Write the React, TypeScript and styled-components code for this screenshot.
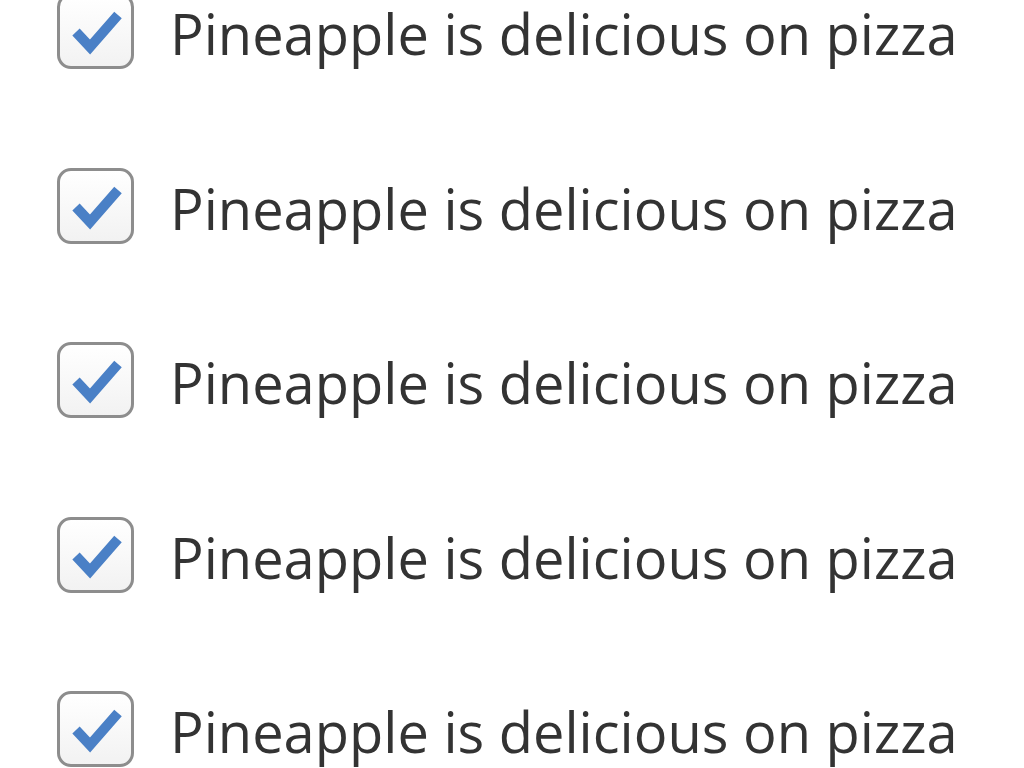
import { createGlobalStyle } from 'styled-components';
import styled from 'styled-components';

const GlobalStyle = createGlobalStyle`
  html, body {
    margin: 0;
    padding: 0;
    background: #fff;
    overflow: hidden;
  }
`;

const List = styled.ul`
  list-style: none;
  margin: -7px 0 0 0;
  padding: 0 0 0 57px;
  display: flex;
  flex-direction: column;
  gap: 98.5px;
  font-family: 'Open Sans', 'Noto Sans', sans-serif;
`;

const Row = styled.li`
  display: flex;
  align-items: center;
  height: 76px;
  gap: 36px;
`;

const Box = styled.span`
  box-sizing: border-box;
  width: 77px;
  height: 76px;
  flex-shrink: 0;
  border: 3px solid #8d8d8d;
  border-radius: 14px;
  background: linear-gradient(#ffffff, #f2f2f2);
  display: flex;
  align-items: center;
  justify-content: center;
  & svg {
    display: block;
  }
`;

const Label = styled.span`
  font-size: 56px;
  color: #333;
  line-height: 1;
  padding-top: 4px;
  white-space: nowrap;
`;

const Check = () => (
  <svg width='71' height='70' viewBox='0 0 71 70'>
    <polyline
      points='16,36 30,51 58,19'
      fill='none'
      stroke='#4a80c6'
      strokeWidth='10'
      strokeLinejoin='miter'
    />
  </svg>
);

const items = Array.from({ length: 5 }, () => 'Pineapple is delicious on pizza');

const App = () => {
  return (
    <>
      <GlobalStyle />
      <List>
        {items.map((text, index) => (
          <Row key={index}>
            <Box>
              <Check />
            </Box>
            <Label>{text}</Label>
          </Row>
        ))}
      </List>
    </>
  );
};

export default App;
